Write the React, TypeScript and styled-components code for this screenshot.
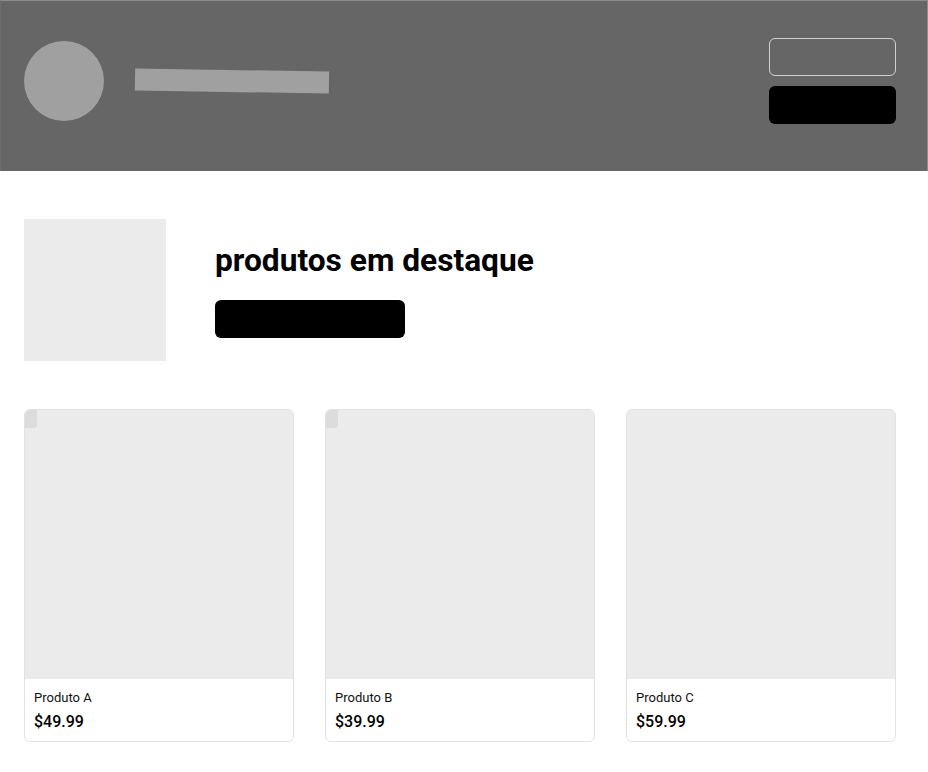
import React from "react";
import styled, { createGlobalStyle } from "styled-components";

const GlobalStyle = createGlobalStyle`
  html, body {
    margin: 0;
    padding: 0;
    background: #fff;
    font-family: Roboto, "Liberation Sans", sans-serif;
  }
  * { box-sizing: border-box; }
`;

const products = [
  { name: "Produto A", price: "$49.99", tag: true },
  { name: "Produto B", price: "$39.99", tag: true },
  { name: "Produto C", price: "$59.99", tag: false },
];

export default function App() {
  return (
    <>
      <GlobalStyle />
      <Page>
        <Header>
          <Brand>
            <Avatar />
            <TitleBar />
          </Brand>
          <Actions>
            <OutlineButton />
            <SolidButton />
          </Actions>
        </Header>

        <Main>
          <Hero>
            <HeroImage />
            <HeroText>
              <HeroTitle>produtos em destaque</HeroTitle>
              <HeroButton />
            </HeroText>
          </Hero>

          <Grid>
            {products.map((p) => (
              <Card key={p.name}>
                <CardImage>{p.tag && <Tag />}</CardImage>
                <CardBody>
                  <Name>{p.name}</Name>
                  <Price>{p.price}</Price>
                </CardBody>
              </Card>
            ))}
          </Grid>
        </Main>
      </Page>
    </>
  );
}

const Page = styled.div`
  width: 928px;
  min-height: 772px;
`;

const Header = styled.header`
  height: 171px;
  background: #666666;
  border: 1px solid #8c8c8c;
  border-bottom: none;
  border-left-color: #6e6e6e;
  display: flex;
  align-items: center;
  justify-content: space-between;
  padding: 36px 31px 47px 23px;
`;

const Brand = styled.div`
  display: flex;
  align-items: center;
  gap: 31px;
`;

const Avatar = styled.div`
  width: 80px;
  height: 80px;
  border-radius: 50%;
  background: #a0a0a0;
`;

const TitleBar = styled.div`
  width: 194px;
  height: 22px;
  background: #a0a0a0;
  transform: rotate(0.9deg);
`;

const Actions = styled.div`
  display: flex;
  flex-direction: column;
  gap: 10px;
`;

const OutlineButton = styled.div`
  width: 127px;
  height: 38px;
  border: 1px solid #d0d0d0;
  border-radius: 6px;
`;

const SolidButton = styled.div`
  width: 127px;
  height: 38px;
  background: #000;
  border-radius: 6px;
`;

const Main = styled.main`
  padding: 48px 32px 30px 24px;
`;

const Hero = styled.section`
  display: flex;
  align-items: center;
  gap: 49px;
`;

const HeroImage = styled.div`
  width: 142px;
  height: 142px;
  background: #ebebeb;
`;

const HeroText = styled.div`
  display: flex;
  flex-direction: column;
  gap: 21px;
`;

const HeroTitle = styled.h1`
  margin: 0;
  font-size: 31.7px;
  line-height: 36px;
  font-weight: 700;
  color: #000;
`;

const HeroButton = styled.div`
  width: 190px;
  height: 38px;
  background: #000;
  border-radius: 6px;
`;

const Grid = styled.section`
  margin-top: 48px;
  display: grid;
  grid-template-columns: repeat(3, 270px);
  gap: 31px;
`;

const Card = styled.article`
  border: 1px solid #e2e2e2;
  border-radius: 6px;
  overflow: hidden;
  background: #fff;
`;

const CardImage = styled.div`
  position: relative;
  height: 269px;
  background: #ebebeb;
`;

const Tag = styled.span`
  position: absolute;
  top: 0;
  left: 0;
  width: 12px;
  height: 18px;
  background: #dcdcdc;
  border-bottom-right-radius: 3px;
`;

const CardBody = styled.div`
  padding: 11px 9px 9px;
  display: flex;
  flex-direction: column;
  gap: 6px;
`;

const Name = styled.div`
  font-size: 13px;
  line-height: 16px;
  color: #111;
`;

const Price = styled.div`
  font-size: 16px;
  line-height: 20px;
  font-weight: 500;
  color: #000;
`;
